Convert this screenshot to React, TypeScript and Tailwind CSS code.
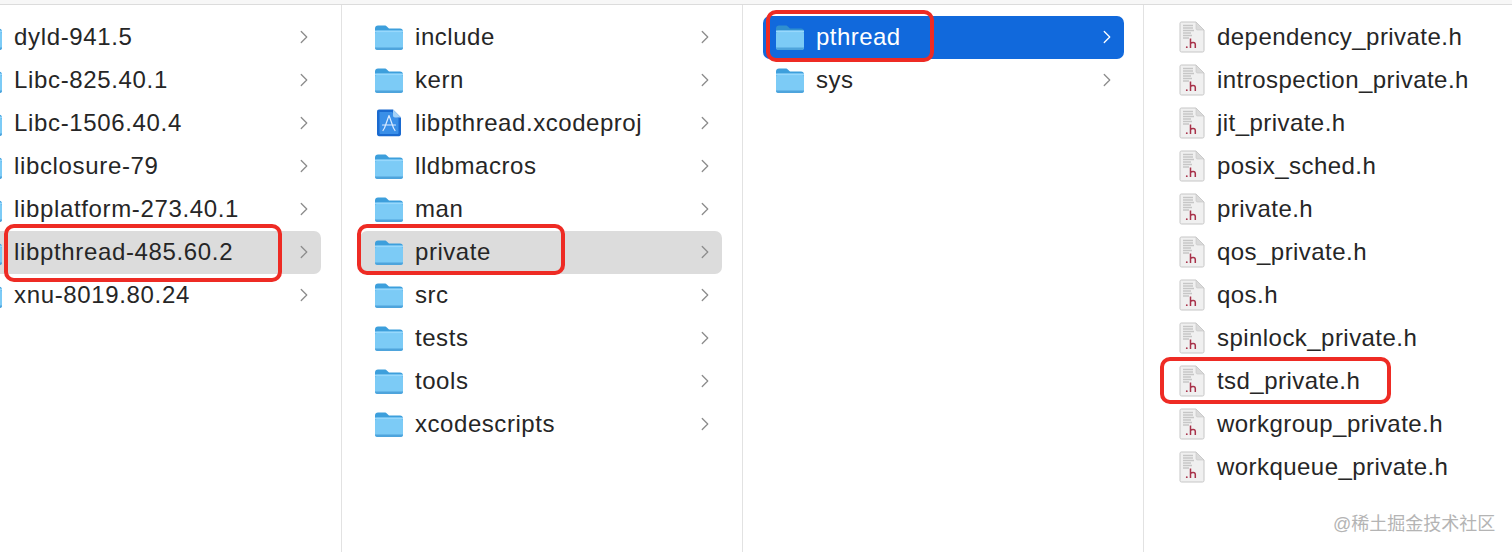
import React from "react";
import { ChevronRight } from "lucide-react";

const Folder = ({ selected = false }: { selected?: boolean }) => (
  <svg width="30" height="28" viewBox="0 0 30 28" className="shrink-0">
    <path d="M1 5.500C1 3.600 2.200 2.500 4 2.500h6.500c1.200 0 1.800.4 2.600 1.200L15 5.500h11c1.800 0 3 1.100 3 3V12H1z" fill={selected ? "#2f8fcf" : "#3d9fdc"} />
    <rect x="1" y="7.500" width="28" height="19.500" rx="2.500" fill="#62b9ee" />
    <rect x="1" y="9" width="28" height="17" rx="2" fill="#7ccbf6" />
    <rect x="1" y="7.500" width="28" height="1.600" fill="#97d8fc" />
    <path d="M1 24.500c0 1.600 1 2.500 2.500 2.500h23c1.500 0 2.500-.9 2.500-2.500z" fill="#4ea4dc" />
  </svg>
);

const ProjectFile = () => (
  <svg width="30" height="30" viewBox="0 0 30 30" className="shrink-0">
    <path d="M3 3.500C3 2.200 3.900 1.500 5 1.500h14l8 8V26c0 1.300-.9 2.200-2 2.200H5c-1.100 0-2-.9-2-2.200z" fill="#1a6ad0" />
    <path d="M5.500 4h12.500l6.500 6.500V25c0 .6-.4 1-1 1h-17c-.6 0-1-.4-1-1z" fill="#3a8fe8" />
    <path d="M19 1.500l8 8h-6c-1.200 0-2-.8-2-2z" fill="#a5d2f7" />
    <path d="M15 7.500L10.500 20M15 7.500L19.500 20M8.500 17h13M10.500 20l-1.500 2.500M19.500 20l1.500 2.500" stroke="#dcecff" strokeWidth="1.200" fill="none" strokeLinecap="round" />
  </svg>
);

const HeaderFile = () => (
  <svg width="26" height="32" viewBox="0 0 26 32" className="mr-px shrink-0">
    <path d="M1 2.500C1 1.600 1.600 1 2.500 1H17l8 8v20.500c0 .9-.6 1.500-1.500 1.500h-21C1.600 31 1 30.400 1 29.500z" fill="#f0f0f0" stroke="#c6c6c6" />
    <path d="M17 1l8 8h-6.500C17.600 9 17 8.400 17 7.500z" fill="#dadada" stroke="#c6c6c6" strokeWidth="0.600" />
    <path d="M4 4.500h10M4 7h10M4 9.500h11M4 12h8M4 14.500h9M4 17h6" stroke="#c6c6c6" strokeWidth="1.300" />
    <circle cx="7.800" cy="26.200" r="0.900" fill="#a8324a" />
    <path d="M11.500 17.500V27M11.500 22.500c.8-1.300 4.800-2 4.800 1V27" stroke="#a8324a" strokeWidth="1.500" fill="none" />
  </svg>
);

type Item = { name: string; kind?: "folder" | "project" | "file"; active?: boolean; focus?: boolean };

const Row = ({
  item,
  left,
  chevron = true,
}: {
  item: Item;
  left: string;
  chevron?: boolean;
}) => (
  <div
    className={`flex h-[43px] items-center rounded-[7px] pb-[2px] ${left} ${
      item.focus ? "bg-[#1169dc] text-white" : item.active ? "bg-[#dcdcdc]" : ""
    }`}
  >
    {item.kind === "project" ? <ProjectFile /> : item.kind === "file" ? <HeaderFile /> : <Folder selected={item.focus} />}
    <span className="ml-[11px] flex-1 whitespace-nowrap">{item.name}</span>
    {chevron && (
      <ChevronRight
        size={22}
        strokeWidth={1.400}
        className={`mr-[6px] shrink-0 ${item.focus ? "text-white" : "text-[#8c8c8c]"}`}
      />
    )}
  </div>
);

const col1: Item[] = [
  { name: "dyld-941.5" },
  { name: "Libc-825.40.1" },
  { name: "Libc-1506.40.4" },
  { name: "libclosure-79" },
  { name: "libplatform-273.40.1" },
  { name: "libpthread-485.60.2", active: true },
  { name: "xnu-8019.80.24" },
];

const col2: Item[] = [
  { name: "include" },
  { name: "kern" },
  { name: "libpthread.xcodeproj", kind: "project" },
  { name: "lldbmacros" },
  { name: "man" },
  { name: "private", active: true },
  { name: "src" },
  { name: "tests" },
  { name: "tools" },
  { name: "xcodescripts" },
];

const col3: Item[] = [{ name: "pthread", focus: true }, { name: "sys" }];

const col4 = [
  "dependency_private.h",
  "introspection_private.h",
  "jit_private.h",
  "posix_sched.h",
  "private.h",
  "qos_private.h",
  "qos.h",
  "spinlock_private.h",
  "tsd_private.h",
  "workgroup_private.h",
  "workqueue_private.h",
];

// red annotation boxes drawn over the finder window
const Mark = ({ className }: { className: string }) => (
  <div className={`absolute rounded-[10px] border-[4px] border-[#ee2b24] ${className}`} />
);

export default function App() {
  return (
    <div className="relative flex h-[552px] w-[1512px] flex-col overflow-hidden bg-white font-['Liberation_Sans',sans-serif] text-[24px] tracking-[0.45px] text-[#262626]">
      <div className="h-[5px] border-b border-[#dcdcdc] bg-[#f7f7f7]" />
      <div className="flex flex-1">
        <div className="w-[342px] shrink-0 border-r border-[#e2e2e2] pt-[11px] tracking-[0.65px]">
          {col1.map((item) => (
            <div key={item.name} className="ml-[-27px] mr-[20px]">
              <Row item={item} left="pl-[0px]" />
            </div>
          ))}
        </div>
        <div className="w-[401px] shrink-0 border-r border-[#e2e2e2] pt-[11px] pl-[18px] pr-[20px] tracking-[0.55px]">
          {col2.map((item) => (
            <Row key={item.name} item={item} left="pl-[14px]" />
          ))}
        </div>
        <div className="w-[401px] shrink-0 border-r border-[#e2e2e2] pt-[11px] pl-[20px] pr-[19px]">
          {col3.map((item) => (
            <Row key={item.name} item={item} left="pl-[12px]" />
          ))}
        </div>
        <div className="flex-1 pt-[11px] pl-[35px]">
          {col4.map((name) => (
            <Row key={name} item={{ name, kind: "file" }} left="" chevron={false} />
          ))}
        </div>
      </div>
      <Mark className="left-[4px] top-[224px] h-[58px] w-[278px]" />
      <Mark className="left-[357px] top-[224px] h-[51px] w-[208px]" />
      <Mark className="left-[766px] top-[10px] h-[52px] w-[168px]" />
      <Mark className="left-[1160px] top-[357px] h-[47px] w-[231px]" />
      <div className="absolute left-[1333px] top-[512px] font-['Liberation_Sans','Noto_Sans_CJK_SC',sans-serif] text-[18px] leading-[24px] tracking-normal text-[#b4b4b4]">
        @稀土掘金技术社区
      </div>
    </div>
  );
}
